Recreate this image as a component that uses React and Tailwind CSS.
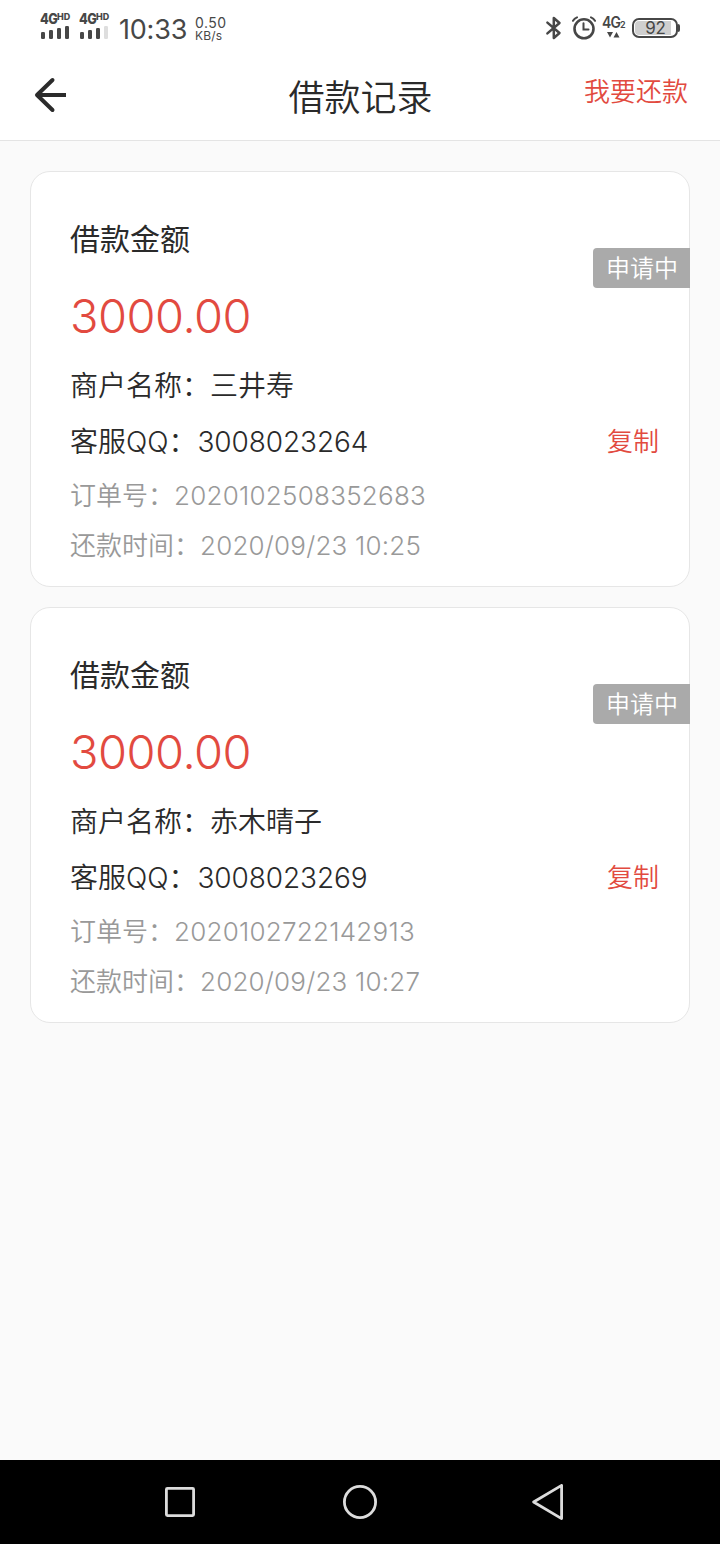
const records = [
  { amount: "3000.00", merchant: "三井寿", qq: "3008023264", order: "2020102508352683", time: "2020/09/23 10:25", status: "申请中" },
  { amount: "3000.00", merchant: "赤木晴子", qq: "3008023269", order: "2020102722142913", time: "2020/09/23 10:27", status: "申请中" },
];

function Signal({ lastBar }) {
  return (
    <div className="flex w-[31px] flex-col items-start">
      <div className="flex h-[13px] items-start text-[#474747]">
        <span className="w-[17px] origin-left scale-x-[0.88] text-[14.500px] leading-[14px] font-extrabold tracking-[-0.6px]">4G</span>
        <span className="text-[9px] leading-[10px] font-extrabold">HD</span>
      </div>
      <svg className="mt-px" width="29" height="13" viewBox="0 0 29 13" fill="#474747">
        <rect x="1" y="6" width="4" height="7" rx="1.2" />
        <rect x="9" y="4" width="4" height="9" rx="1.2" />
        <rect x="17" y="2" width="4" height="11" rx="1.2" />
        <rect x="25" y="0" width="4" height="13" rx="1.2" fill={lastBar} />
      </svg>
    </div>
  );
}

function StatusBar() {
  return (
    <div className="flex h-[56px] items-start justify-between pr-[40px] pl-[40px] text-[#474747]">
      <div className="flex items-start">
        <div className="flex gap-[8px] pt-[12px]">
          <Signal lastBar="#474747" />
          <Signal lastBar="#dedede" />
        </div>
        <span className="ml-[9px] w-[76px] pt-[14px] text-[27px] leading-[32px] tracking-[-0.2px] whitespace-nowrap">10:33</span>
        <div className="flex flex-col pt-[16px] leading-[13px] whitespace-nowrap">
          <span className="text-[14px] leading-[13px] tracking-[0.5px]">0.50</span>
          <span className="text-[12px] leading-[13px] tracking-[0.2px]">KB/s</span>
        </div>
      </div>
      <div className="flex items-start">
        <svg className="mt-[16px]" width="18" height="24" viewBox="0 0 18 24" fill="none" stroke="#474747" strokeWidth="2.500" strokeLinejoin="round" strokeLinecap="round">
          <path d="M2.400 6.600 14.500 17 8.800 22V2L14.500 7 2.400 17.400" />
        </svg>
        <svg className="mt-[16px] ml-[9px]" width="24" height="24" viewBox="0 0 24 24" fill="none" stroke="#474747" strokeLinecap="round">
          <circle cx="12" cy="12.800" r="9.500" strokeWidth="2.600" />
          <path d="M11.500 7.300V13.500H16.500" strokeWidth="2" />
          <path d="M1 4.800Q2.400 2.400 5 1.400M23 4.800Q21.600 2.400 19 1.400" strokeWidth="2" />
        </svg>
        <div className="ml-[6px] flex w-[24px] flex-col pt-[15px]">
          <div className="flex h-[16px] items-end whitespace-nowrap">
            <span className="w-[18px] origin-left scale-x-[0.9] text-[15.500px] leading-[17px] font-semibold tracking-[-0.8px]">4G</span>
            <span className="text-[9px] leading-[13px] font-semibold">2</span>
          </div>
          <svg className="ml-[5px]" width="13" height="7" viewBox="0 0 13 7" fill="#474747">
            <path d="M0 1H6L3 6.500ZM6.500 6.500H12.500L9.500 1Z" />
          </svg>
        </div>
        <div className="mt-[18px] ml-[6px] flex items-center">
          <div className="flex h-[20px] w-[46px] rounded-[7px] border-2 border-[#474747] p-px">
            <div className="flex h-[14px] w-[36px] items-center justify-center rounded-l-[4px] bg-[#cfcfcf]">
              <span className="pl-[5px] text-[17px] leading-[14px] tracking-[-0.3px]">92</span>
            </div>
          </div>
          <div className="h-[8px] w-[2px] rounded-r-[2px] bg-[#474747]" />
        </div>
      </div>
    </div>
  );
}

function Header() {
  return (
    <header className="grid h-[85px] grid-cols-[1fr_auto_1fr] items-start border-b border-[#e4e4e4] pr-[32px] pl-[33px]">
      <button className="mt-[21px] ml-px w-fit" aria-label="返回">
        <svg width="33" height="36" viewBox="0 0 33 36" fill="none" stroke="#2b2b2b" strokeWidth="4" strokeLinejoin="round">
          <path d="M18.500 3 3 18 18.500 33" strokeLinecap="round" />
          <path d="M3 18H32" />
        </svg>
      </button>
      <h1 className="pt-[16px] text-[36px] leading-[52px] font-[350] text-[#2a2a2a]">借款记录</h1>
      <button className="justify-self-end pt-[16px] text-[26px] leading-[40px] font-[350] text-[#e24a40]">我要还款</button>
    </header>
  );
}

function RecordCard({ record }) {
  return (
    <article className="relative flex h-[416px] flex-col rounded-[20px] border border-[#e6e6e6] bg-white pt-[45px] pr-[30px] pl-[39px]">
      <h2 className="text-[30px] leading-[44px] text-[#2a2a2a]">借款金额</h2>
      <p className="mt-[15px] text-[47px] leading-[80px] font-[350] tracking-[-0.5px] text-[#e24a40]">{record.amount}</p>
      <p className="mt-[2px] text-[28px] leading-[56px] font-[350] text-[#2a2a2a]">商户名称：{record.merchant}</p>
      <div className="flex items-center justify-between leading-[56px] font-[350]">
        <p className="text-[28px] text-[#2a2a2a]">
          客服QQ：<span className="ml-px tracking-[-0.1px]">{record.qq}</span>
        </p>
        <button className="text-[26px] text-[#e24a40]">复制</button>
      </div>
      <p className="mt-px text-[26px] leading-[50px] font-[350] text-[#999]">
        订单号：<span className="tracking-[0.25px]">{record.order}</span>
      </p>
      <p className="text-[26px] leading-[50px] font-[350] text-[#999]">
        还款时间：<span className="tracking-[0.2px]">{record.time}</span>
      </p>
      <span className="absolute top-[76px] -right-px h-[40px] w-[97px] rounded-l-[4px] bg-[#aaa] pl-[13px] text-[24px] leading-[42px] font-[350] text-white">
        {record.status}
      </span>
    </article>
  );
}

function NavigationBar() {
  return (
    <nav className="flex h-[84px] items-center bg-black pl-[162px]">
      <svg width="36" height="36" viewBox="0 0 36 36" fill="none" stroke="#dcdcdc" strokeWidth="2.800">
        <rect x="4.400" y="4.400" width="27.200" height="27.200" rx="1" />
      </svg>
      <svg className="ml-[144px]" width="36" height="36" viewBox="0 0 36 36" fill="none" stroke="#dcdcdc" strokeWidth="2.800">
        <circle cx="18" cy="18" r="15.600" />
      </svg>
      <svg className="ml-[152px]" width="36" height="36" viewBox="0 0 36 36" fill="none" stroke="#dcdcdc" strokeWidth="2.800" strokeLinejoin="round">
        <path d="M31.600 1.400V34.600L3.600 18Z" />
      </svg>
    </nav>
  );
}

export default function App() {
  return (
    <div className="flex h-[1544px] w-[720px] flex-col bg-[#fafafa] font-['Inter','Noto_Sans_CJK_SC',sans-serif]">
      <div className="bg-white">
        <StatusBar />
        <Header />
      </div>
      <main className="flex flex-1 flex-col gap-[20px] px-[30px] pt-[30px]">
        {records.map((record) => (
          <RecordCard key={record.order} record={record} />
        ))}
      </main>
      <NavigationBar />
    </div>
  );
}
